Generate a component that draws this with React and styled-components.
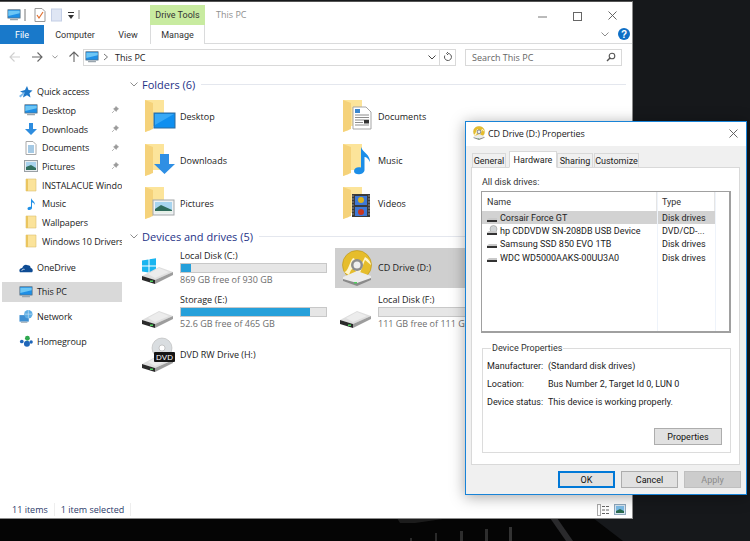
import React from 'react';
import styled, { createGlobalStyle } from 'styled-components';

const GlobalStyle = createGlobalStyle`
  html, body { margin: 0; padding: 0; background: #16181b; }
  body { width: 750px; height: 541px; overflow: hidden; font-family: "Open Sans", "Noto Sans", sans-serif; font-size: 9px; color: #111; }
  * { box-sizing: border-box; }
`;

const Desktop = styled.div`
  position: relative;
  width: 750px;
  height: 541px;
  overflow: hidden;
  background: #16181b;
`;

const Wallpaper = styled.svg`
  position: absolute;
  left: 0;
  top: 0;
`;

const ExplorerWindow = styled.div`
  position: absolute;
  left: 0;
  top: 1px;
  width: 633px;
  height: 518px;
  background: #fff;
  border: 1px solid #8c8c8c;
  border-top-color: #555;
  border-left: 0;
  display: flex;
  flex-direction: column;
`;

const TitleBar = styled.div`
  height: 23px;
  display: flex;
  align-items: flex-start;
  padding: 3px 0 0 7px;
  flex: none;
`;

const QuickTools = styled.div`
  width: 143px;
  height: 20px;
  display: flex;
  align-items: center;
`;

const ToolGlyph = styled.svg`
  flex: none;
  margin-left: ${p => p.$ml || 0}px;
  margin-top: ${p => p.$mt || 0}px;
`;

const ContextTab = styled.div`
  width: 55px;
  height: 20px;
  background: #c8eba0;
  display: flex;
  align-items: center;
  justify-content: center;
  color: #333;
  font-family: Roboto, sans-serif;
`;

const WindowTitle = styled.div`
  margin-left: 11px;
  height: 20px;
  line-height: 19px;
  color: #8f8f8f;
  flex: 1;
`;

const Controls = styled.div`
  display: flex;
  width: 94px;
  justify-content: space-between;
  padding: 6px 15px 0 0;
`;

const RibbonTabs = styled.div`
  height: 19px;
  border-bottom: 1px solid #dadbdc;
  display: flex;
  align-items: stretch;
  flex: none;
  font-family: Roboto, sans-serif;
`;

const FileTab = styled.div`
  width: 44px;
  background: #1979ca;
  color: #fff;
  display: flex;
  align-items: center;
  justify-content: center;
  height: 19px;
`;

const RibbonTab = styled.div`
  width: ${p => p.$w}px;
  display: flex;
  align-items: center;
  justify-content: center;
  color: #333;
  height: 19px;
  background: #fff;
  ${p => p.$context && 'border-left: 1px solid #dadbdc; border-right: 1px solid #dadbdc;'}
`;

const RibbonRight = styled.div`
  margin-left: auto;
  display: flex;
  align-items: center;
  gap: 9px;
  padding-right: 2px;
`;

const NavBar = styled.div`
  height: 26px;
  display: flex;
  align-items: center;
  flex: none;
  padding-left: 9px;
`;

const NavButtons = styled.div`
  width: 74px;
  display: flex;
  align-items: center;
  justify-content: space-between;
  padding-right: 3px;
`;

const AddressBox = styled.div`
  width: 373px;
  height: 17px;
  border: 1px solid #d9d9d9;
  display: flex;
  align-items: center;
  padding-left: 1px;
  color: #222;
  gap: 4px;
`;

const AddressText = styled.span`
  margin-left: 2px;
`;

const AddressEnd = styled.div`
  margin-left: auto;
  display: flex;
  height: 100%;
  align-items: center;
  gap: 3px;
`;

const RefreshCell = styled.div`
  width: 16px;
  height: 100%;
  border-left: 1px solid #d9d9d9;
  display: flex;
  align-items: center;
  justify-content: center;
`;

const SearchBox = styled.div`
  width: 157px;
  height: 17px;
  margin-left: 9px;
  border: 1px solid #d9d9d9;
  display: flex;
  align-items: center;
  justify-content: space-between;
  padding: 0 5px 0 6px;
  color: #666;
`;

const Body = styled.div`
  flex: 1;
  display: flex;
  min-height: 0;
`;

const NavPane = styled.div`
  width: 124px;
  flex: none;
  padding: 12px 2px 0;
  overflow: hidden;
  letter-spacing: -0.1px;
`;

const NavRow = styled.div`
  height: ${p => p.$h || 18.7}px;
  display: flex;
  align-items: center;
  gap: 4px;
  padding-left: ${p => p.$sub ? 22 : 17}px;
  margin-top: ${p => p.$gap || 0}px;
  white-space: nowrap;
  overflow: hidden;
  color: #1c1c1c;
  background: ${p => p.$active ? '#d9d9d9' : 'transparent'};
`;

const NavIconBox = styled.span`
  width: 14px;
  height: 14px;
  flex: none;
  display: flex;
  align-items: center;
  justify-content: center;
`;

const NavPin = styled.span`
  position: absolute;
  left: 111px;
  display: flex;
`;

const Content = styled.div`
  flex: 1;
  padding: 4px 6px 0 6px;
  min-width: 0;
  overflow: hidden;
`;

const GroupHeader = styled.div`
  height: 20px;
  display: flex;
  align-items: center;
  color: #1e3287;
  font-size: 11px;
  gap: 4px;
  white-space: nowrap;
`;

const HeaderLine = styled.div`
  flex: 1;
  height: 1px;
  background: #e4e7ee;
  margin-left: 2px;
`;

const FolderGrid = styled.div`
  display: grid;
  grid-template-columns: 198px 198px;
  grid-auto-rows: 43.5px;
  padding: 1px 0 0 15px;
  height: 132px;
`;

const FolderItem = styled.div`
  display: flex;
  align-items: center;
  gap: 3px;
  color: #222;
`;

const DriveGrid = styled.div`
  display: grid;
  grid-template-columns: 198px 198px;
  grid-auto-rows: 43.5px;
  padding: 2px 0 0 7px;
`;

const DriveItem = styled.div`
  display: flex;
  align-items: center;
  gap: 3px;
  height: 40px;
  background: ${p => p.$selected ? '#cfcfcf' : 'transparent'};
  color: #222;
`;

const DriveIconBox = styled.span`
  width: 36px;
  height: 36px;
  flex: none;
  display: flex;
  align-items: center;
  justify-content: center;
  margin-left: 4px;
`;

const DriveText = styled.div`
  display: flex;
  flex-direction: column;
  width: 147px;
  white-space: nowrap;
  line-height: 12px;
`;

const UsageBar = styled.div`
  height: 10px;
  width: 147px;
  background: #e6e6e6;
  border: 1px solid #c8c8c8;
  margin: 1px 0;
`;

const UsageFill = styled.div`
  height: 100%;
  background: #26a0da;
`;

const DriveFree = styled.div`
  color: #6d6d6d;
`;

const StatusBar = styled.div`
  height: 17px;
  flex: none;
  display: flex;
  align-items: center;
  color: #2b3a6a;
  padding: 0 6px 0 12px;
`;

const StatusCell = styled.div`
  padding-right: 6px;
  margin-right: 6px;
  border-right: 1px solid #eee;
`;

const ViewIcons = styled.div`
  margin-left: auto;
  display: flex;
  gap: 5px;
  align-items: center;
`;

const Dialog = styled.div`
  position: absolute;
  left: 465px;
  top: 121px;
  width: 282px;
  height: 374px;
  background: #f0f0f0;
  border: 1px solid #1883d7;
  box-shadow: 0 2px 14px rgba(0, 0, 0, 0.35);
  display: flex;
  flex-direction: column;
  font-family: Roboto, "Open Sans", sans-serif;
`;

const DialogTitle = styled.div`
  height: 24px;
  background: #fff;
  display: flex;
  align-items: center;
  padding: 0 8px 2px 6px;
  gap: 2px;
  flex: none;
  color: #222;
  font-family: "Open Sans", sans-serif;
  letter-spacing: -0.1px;
`;

const DialogClose = styled.span`
  margin-left: auto;
  display: flex;
`;

const TabStrip = styled.div`
  height: 21px;
  padding: 7px 0 0 6px;
  display: flex;
  align-items: flex-end;
  flex: none;
  position: relative;
  z-index: 1;
`;

const DialogTab = styled.div`
  height: ${p => p.$active ? 17 : 15}px;
  width: ${p => p.$w}px;
  display: flex;
  align-items: center;
  justify-content: center;
  background: ${p => p.$active ? '#fff' : '#f0f0f0'};
  border: 1px solid #d9d9d9;
  border-bottom: ${p => p.$active ? '1px solid #fff' : '1px solid #d9d9d9'};
  margin-left: ${p => p.$ml || 0}px;
  margin-bottom: -1px;
  color: #222;
`;

const TabPane = styled.div`
  height: 298px;
  margin: 0 6px 0 5px;
  background: #fff;
  border: 1px solid #d9d9d9;
  padding: 8px 0 0 9px;
  flex: none;
`;

const PaneLabel = styled.div`
  height: 15px;
  line-height: 12px;
  color: #333;
  padding-left: 1px;
`;

const ListBox = styled.div`
  height: 142px;
  width: 250px;
  border: 1px solid #a0a0a0;
  border-width: 1px 2px 2px 1px;
  position: relative;
`;

const ListGrid = styled.div`
  display: grid;
  grid-template-columns: 175px 58px;
`;

const ListHead = styled.div`
  height: 19px;
  display: flex;
  align-items: center;
  padding-left: 5px;
  color: #333;
  border-right: 1px solid #e5e5e5;
`;

const ListRow = styled.div`
  grid-column: 1 / 3;
  display: grid;
  grid-template-columns: 175px 58px;
  height: 13.3px;
  align-items: center;
  background: ${p => p.$selected ? '#d2d2d2' : 'transparent'};
  white-space: nowrap;
  color: #222;
`;

const RowName = styled.div`
  display: flex;
  align-items: center;
  gap: 2px;
  padding-left: 4px;
`;

const RowType = styled.div`
  padding-left: 5px;
  overflow: hidden;
`;

const ColumnRule = styled.div`
  position: absolute;
  top: 0;
  bottom: 0;
  left: ${p => p.$x}px;
  width: 1px;
  background: #eef3fa;
`;

const GroupBox = styled.fieldset`
  margin: 10px 0 0 1px;
  padding: 0 4px;
  width: 249px;
  height: 110px;
  border: 1px solid #dcdcdc;
  display: flex;
  flex-direction: column;
  min-width: 0;
`;

const Legend = styled.legend`
  padding: 0 1px;
  margin-left: 4px;
  color: #333;
  font-size: 9px;
  line-height: 11px;
`;

const PropRows = styled.div`
  display: flex;
  flex-direction: column;
  margin-top: 3px;
`;

const PropRow = styled.div`
  height: 18px;
  display: grid;
  grid-template-columns: 61px 1fr;
  align-items: center;
  color: #222;
  white-space: nowrap;
`;

const Button = styled.div`
  height: 17px;
  width: ${p => p.$w}px;
  background: ${p => p.$disabled ? '#ccc' : '#e1e1e1'};
  border: 1px solid ${p => p.$primary ? '#0078d7' : p.$disabled ? '#bfbfbf' : '#adadad'};
  ${p => p.$primary && 'box-shadow: inset 0 0 0 1px #0078d7;'}
  color: ${p => p.$disabled ? '#8b8b8b' : '#111'};
  display: flex;
  align-items: center;
  justify-content: center;
`;

const GroupButtonRow = styled.div`
  margin-top: 17px;
  display: flex;
  justify-content: flex-end;
  padding-right: 4px;
`;

const DialogFooter = styled.div`
  flex: 1;
  display: flex;
  justify-content: flex-end;
  gap: 6px;
  padding: 6px 5px 0 0;
`;

/* ---- icons ---- */

const Monitor = ({ size = 14 }) => (
  <svg width={size} height={size} viewBox="0 0 16 16">
    <rect x="1" y="2" width="14" height="9.5" fill="#1e8fe6" stroke="#5a6a78" strokeWidth="0.8" />
    <path d="M1.5 3 L14.5 3 L14.5 6 L1.5 9Z" fill="#6cc6f5" />
    <rect x="3.5" y="12.5" width="9" height="1.5" fill="#9aa5ad" />
  </svg>
);

const Pin = () => (
  <svg width="8" height="8" viewBox="0 0 8 8">
    <path d="M5 0.5 L7.5 3 L6.4 3.4 L5.2 5.4 L2.6 2.8 L4.6 1.6Z M3.4 4.6 L1 7" fill="#9a9a9a" stroke="#9a9a9a" strokeWidth="0.7" />
  </svg>
);

const BlueArrow = ({ size = 14 }) => (
  <svg width={size} height={size} viewBox="0 0 14 14">
    <path d="M5 1 H9 V7 H13 L7 13 L1 7 H5Z" fill="#2e8ddf" />
  </svg>
);

const MiniDoc = () => (
  <svg width="12" height="14" viewBox="0 0 12 14">
    <path d="M1 .5 H8 L11 3.5 V13.5 H1Z" fill="#fff" stroke="#a8a8a8" />
    <path d="M3 5H9M3 7H9M3 9H9M3 11H9" stroke="#4a93c9" />
  </svg>
);

const MiniPicture = () => (
  <svg width="14" height="12" viewBox="0 0 14 12">
    <rect x=".5" y=".5" width="13" height="11" fill="#e9edf0" stroke="#9aa0a5" />
    <rect x="2" y="2" width="10" height="8" fill="#a9d3ee" />
    <path d="M2 7 L7 5 L12 8 V10 H2Z" fill="#31705f" />
  </svg>
);

const Note = ({ size = 14 }) => (
  <svg width={size} height={size} viewBox="0 0 14 14">
    <path d="M7 1 C8 4 11 4 11 8 C10 6 9 5.5 8 5.5 V11 C8 13 3.5 14 3.5 11.5 C3.5 10 5.5 9.3 7 9.8Z" fill="#1e8fe6" />
  </svg>
);

const MiniFolder = () => (
  <svg width="12" height="14" viewBox="0 0 12 14">
    <path d="M1 1 H11 V13 H1Z" fill="#fbe39a" stroke="#dcc070" strokeWidth=".6" />
    <path d="M1 1 H3 V13 H1Z" fill="#eac55f" />
  </svg>
);

const Star = () => (
  <svg width="14" height="14" viewBox="0 0 14 14">
    <path d="M8 1 L9.5 5 L13.5 5.5 L10.5 8.3 L11.5 12.5 L8 10.3 L4 12.5 L5 8.3 L1 6.5 L6 5Z" fill="#1e78c8" />
    <path d="M0 11 L5 7 L6 8 L1.5 12.5Z" fill="#7cb9ea" />
  </svg>
);

const Cloud = () => (
  <svg width="15" height="10" viewBox="0 0 15 10">
    <path d="M1 9.5 C-.5 7 1 5 3.5 5 C4 2 7 .5 9.5 2 C11.5 2 12.5 3.5 12.5 5 C14.5 5 15.5 8 14 9.5Z" fill="#0f4c94" />
    <path d="M3 8 C3 6.5 5 6 6 6.5" stroke="#fff" strokeWidth=".8" fill="none" />
  </svg>
);

const Globe = () => (
  <svg width="15" height="15" viewBox="0 0 15 15">
    <rect x="0.5" y="6" width="10" height="7" fill="#3f8fd2" />
    <circle cx="10" cy="5" r="4.5" fill="#5faee4" />
    <path d="M6 5H14M10 .5V9.5" stroke="#d7ecfa" strokeWidth=".6" />
    <rect x="2" y="13" width="7" height="1.2" fill="#9aa5ad" />
  </svg>
);

const Homegroup = () => (
  <svg width="15" height="13" viewBox="0 0 15 13">
    <circle cx="9" cy="3" r="2.6" fill="#2fa84f" />
    <circle cx="8.5" cy="9" r="3.2" fill="#1f66b8" />
    <circle cx="3" cy="6.5" r="2" fill="#1f66b8" />
    <circle cx="13" cy="7" r="1.8" fill="#1f66b8" />
  </svg>
);

const BigFolderBack = () => (
  <>
    <path d="M0 0 H19 V26 H6 V30 L0 32Z" fill="#fce49a" />
    <path d="M0 0 L8 3 V29 L0 32Z" fill="#f5d27a" />
  </>
);

const FolderIcon = ({ overlay }) => (
  <svg width="32" height="33" viewBox="0 0 32 33">
    <BigFolderBack />
    {overlay === 'desktop' && (
      <g>
        <rect x="9" y="13" width="21" height="15" fill="#0f8ff0" stroke="#2c6a9e" />
        <path d="M10 14 H29 L10 25Z" fill="#38a9f7" />
      </g>
    )}
    {overlay === 'downloads' && <path d="M15 10 H24 V20 H30 L19.5 30 L9 20 H15Z" fill="#2f8fe4" />}
    {overlay === 'documents' && (
      <g>
        <path d="M10 7 H23 L28 12 V29 H10Z" fill="#fff" stroke="#a5a5a5" />
        <path d="M12 9 H17 V13 H12Z" fill="#3b87cf" />
        <path d="M12 15H26M12 17.5H26M12 20H26M12 22.5H20M12 25H26" stroke="#8c8c8c" />
        <rect x="21" y="20" width="5" height="3.5" fill="#333" />
      </g>
    )}
    {overlay === 'music' && (
      <path d="M18 3 C20 9 27 10 27 18 C25 14 23 13 21.5 13 V26 C21.5 31 11 32 11 27 C11 23.500 15 22.500 18 23.500Z" fill="#1c8ee8" />
    )}
    {overlay === 'pictures' && (
      <g>
        <rect x="8" y="13" width="21" height="15" fill="#eef1f3" stroke="#a3a7aa" />
        <rect x="10" y="15" width="17" height="11" fill="#a7d4ef" />
        <path d="M10 22 L16 18 L27 23 V26 H10Z" fill="#2f6c5c" />
        <path d="M10 24 H27 V26 H10Z" fill="#e6f0e8" />
      </g>
    )}
    {overlay === 'videos' && (
      <g>
        <rect x="9" y="7" width="18" height="23" fill="#3a3a3a" />
        <rect x="12" y="9" width="12" height="9" fill="#3e78d6" />
        <rect x="12" y="20" width="12" height="9" fill="#3e78d6" />
        <circle cx="18" cy="13" r="3" fill="#d9b21d" />
        <circle cx="18" cy="25" r="3" fill="#c9361f" />
        <path d="M10 8.500V29M26 8.500V29" stroke="#ddd" strokeWidth="1" strokeDasharray="1 2" />
      </g>
    )}
  </svg>
);

const DriveBase = ({ y = 0 }) => (
  <g transform={`translate(0 ${y})`}>
    <path d="M0 26 L17 17 L31 22 L13 30Z" fill="#dedede" />
    <path d="M6 24 L17 18 L27 22 L13 28Z" fill="#ececec" />
    <path d="M0 26 L13 30 V34 L0 30Z" fill="#2a2a2a" />
    <path d="M13 30 L31 22 V25 L13 34Z" fill="#9d9d9d" />
    <rect x="8" y="30.500" width="3" height="1.500" fill="#4fce5d" />
  </g>
);

const DriveIcon = ({ kind }) => (
  <svg width="34" height="36" viewBox="0 0 34 36">
    {kind === 'windows' && (
      <path d="M0 10.500 L6.500 9.500 V15.500 H0Z M7.500 9.300 L14 8.300 V15.500 H7.500Z M0 16.500 H6.500 V22.500 L0 21.500Z M7.500 16.500 H14 V23.700 L7.500 22.700Z" fill="#19b5f0" />
    )}
    {kind === 'dvd' && (
      <g>
        <circle cx="20" cy="11" r="10" fill="#d9dde0" stroke="#b5b5b5" strokeWidth=".6" />
        <circle cx="20" cy="11" r="3" fill="#fff" stroke="#aaa" strokeWidth=".6" />
      </g>
    )}
    <DriveBase y={kind === 'dvd' ? 1 : 0} />
    {kind === 'dvd' && (
      <g>
        <rect x="12" y="15" width="21" height="10" rx="1" fill="#151515" />
        <text x="22.500" y="23" fontSize="8" textAnchor="middle" fill="#fff" fontFamily="'Liberation Sans', sans-serif">DVD</text>
      </g>
    )}
  </svg>
);

const GoldDisc = ({ size = 36 }) => (
  <svg width={size} height={size} viewBox="0 0 36 36">
    <circle cx="18" cy="15" r="14.500" fill="#e6bd2c" stroke="#b89418" strokeWidth=".6" />
    <path d="M5 22 C10 22 11 8 15 8 L20 19 L26 7 C30 9 32 13 32 15 L26 10 L21 23 C16 24 14 12 10 25Z" fill="#fff6cc" />
    <circle cx="18" cy="15" r="6" fill="#8d8d8d" />
    <circle cx="18" cy="15" r="3.500" fill="#efefef" />
    <path d="M4 27 L18 21 L32 26 L32 30 L18 35 L4 31Z" fill="#ececec" />
    <path d="M4 29 L18 33 L32 28 V30 L18 36 L4 31Z" fill="#8a8a8a" />
    <rect x="15" y="32" width="3" height="1.500" fill="#4fce5d" />
  </svg>
);

const MiniDrive = ({ disc }) => (
  <svg width="12" height="12" viewBox="0 0 12 12">
    {disc && <circle cx="7.500" cy="4" r="3.500" fill="#d0d4d6" stroke="#888" strokeWidth=".5" />}
    <path d="M1 7.500 L3 6 H11 V8 H1Z" fill="#c9c9c9" />
    <rect x="1" y="8" width="10" height="2" fill="#333" />
  </svg>
);

const Chev = ({ color = '#8d8d8d', w = 8, h = 5 }) => (
  <svg width={w} height={h} viewBox="0 0 8 5">
    <path d="M.5 .5 L4 4 L7.500 .5" stroke={color} fill="none" strokeWidth="1" />
  </svg>
);

const Close = ({ size = 9 }) => (
  <svg width={size} height={size} viewBox="0 0 9 9">
    <path d="M.5 .5 L8.500 8.500 M8.500 .5 L.5 8.500" stroke="#555" strokeWidth=".9" />
  </svg>
);

const ArrowGlyph = styled.svg`
  transform: rotate(${p => p.$dir}deg);
`;

const Arrow = ({ dir, color }) => (
  <ArrowGlyph $dir={dir} width="12" height="12" viewBox="0 0 12 12">
    <path d="M1 6 H11 M6.500 1.500 L11 6 L6.500 10.500" stroke={color} fill="none" strokeWidth="1.100" />
  </ArrowGlyph>
);

const navItems = [
  { label: 'Desktop', icon: <Monitor />, pin: true },
  { label: 'Downloads', icon: <BlueArrow />, pin: true },
  { label: 'Documents', icon: <MiniDoc />, pin: true },
  { label: 'Pictures', icon: <MiniPicture />, pin: true },
  { label: 'INSTALACUE Windows', icon: <MiniFolder /> },
  { label: 'Music', icon: <Note /> },
  { label: 'Wallpapers', icon: <MiniFolder /> },
  { label: 'Windows 10 Drivers', icon: <MiniFolder /> },
];

const folders = [
  ['Desktop', 'desktop'],
  ['Documents', 'documents'],
  ['Downloads', 'downloads'],
  ['Music', 'music'],
  ['Pictures', 'pictures'],
  ['Videos', 'videos'],
];

const diskRows = [
  { name: 'Corsair Force GT', type: 'Disk drives', selected: true },
  { name: 'hp CDDVDW SN-208DB USB Device', type: 'DVD/CD-...', disc: true },
  { name: 'Samsung SSD 850 EVO 1TB', type: 'Disk drives' },
  { name: 'WDC WD5000AAKS-00UU3A0', type: 'Disk drives' },
];

export default function App() {
  return (
    <>
      <GlobalStyle />
      <Desktop>
        <Wallpaper width="750" height="541" viewBox="0 0 750 541">
          <path d="M0 518 H593 L623 541 H0Z" fill="#050505" />
          <path d="M397 518 H450 L415 523 H400Z" fill="#1c1c1c" />
          <path d="M550 518 H557 L573 541 H566Z" fill="#2a2a2c" />
          <rect x="410" y="538" width="2" height="3" fill="#2a2a2a" />
          <rect x="435" y="533" width="2" height="8" fill="#2a2a2a" />
          <rect x="460" y="531" width="3" height="10" fill="#2e2e2e" />
          <rect x="485" y="529" width="3" height="12" fill="#2e2e2e" />
          <rect x="509" y="527" width="3" height="14" fill="#333" />
        </Wallpaper>

        <ExplorerWindow>
          <TitleBar>
            <QuickTools>
              <Monitor size={14} />
              <ToolGlyph width="8" height="16" viewBox="0 0 8 16">
                <path d="M4 2V14" stroke="#777" />
              </ToolGlyph>
              <ToolGlyph $ml={5} width="12" height="14" viewBox="0 0 12 14">
                <path d="M1 .5H8L11 3.500V13.500H1Z" fill="#fff" stroke="#999" />
                <path d="M3 7L5 10L9 4" stroke="#e07030" fill="none" strokeWidth="1.200" />
              </ToolGlyph>
              <ToolGlyph $ml={5} width="12" height="14" viewBox="0 0 12 14">
                <rect x=".5" y="1" width="10" height="12" fill="#dfe6f4" stroke="#c4cfe6" />
              </ToolGlyph>
              <ToolGlyph $ml={5} width="6" height="7" viewBox="0 0 6 7">
                <path d="M0 0H6V1H0Z M0 3H6L3 7Z" fill="#333" />
              </ToolGlyph>
              <ToolGlyph $ml={1} width="8" height="12" viewBox="0 0 8 12">
                <path d="M4 1V10" stroke="#888" />
              </ToolGlyph>
            </QuickTools>
            <ContextTab>Drive Tools</ContextTab>
            <WindowTitle>This PC</WindowTitle>
            <Controls>
              <ToolGlyph $mt={1} width="9" height="9" viewBox="0 0 9 9">
                <path d="M0 5H9" stroke="#777" />
              </ToolGlyph>
              <ToolGlyph $mt={1} width="9" height="9" viewBox="0 0 9 9">
                <rect x=".5" y=".5" width="8" height="8" fill="none" stroke="#666" />
              </ToolGlyph>
              <Close />
            </Controls>
          </TitleBar>

          <RibbonTabs>
            <FileTab>File</FileTab>
            <RibbonTab $w={62}>Computer</RibbonTab>
            <RibbonTab $w={44}>View</RibbonTab>
            <RibbonTab $w={55} $context>Manage</RibbonTab>
            <RibbonRight>
              <Chev />
              <svg width="12" height="12" viewBox="0 0 12 12">
                <circle cx="6" cy="6" r="6" fill="#0f6fc6" />
                <text x="6" y="9.500" textAnchor="middle" fontSize="10" fontWeight="700" fill="#fff" fontFamily="'Liberation Sans', sans-serif">?</text>
              </svg>
            </RibbonRight>
          </RibbonTabs>

          <NavBar>
            <NavButtons>
              <Arrow dir={180} color="#cfcfcf" />
              <Arrow dir={0} color="#666" />
              <Chev w={6} h={4} color="#777" />
              <Arrow dir={-90} color="#666" />
            </NavButtons>
            <AddressBox>
              <Monitor size={14} />
              <svg width="6" height="8" viewBox="0 0 6 8">
                <path d="M1 1L4.500 4L1 7" stroke="#777" fill="none" />
              </svg>
              <AddressText>This PC</AddressText>
              <AddressEnd>
                <Chev color="#444" />
                <RefreshCell>
                  <svg width="10" height="10" viewBox="0 0 10 10">
                    <path d="M5 1.500A3.500 3.500 0 1 1 1.800 3.500 M5 0L3.500 1.500L5 3" stroke="#555" fill="none" />
                  </svg>
                </RefreshCell>
              </AddressEnd>
            </AddressBox>
            <SearchBox>
              Search This PC
              <svg width="10" height="10" viewBox="0 0 10 10">
                <circle cx="6" cy="4" r="2.800" stroke="#555" fill="none" strokeWidth="1.100" />
                <path d="M4 6L1 9" stroke="#555" strokeWidth="1.400" />
              </svg>
            </SearchBox>
          </NavBar>

          <Body>
            <NavPane>
              <NavRow $h={19}>
                <NavIconBox><Star /></NavIconBox>
                Quick access
              </NavRow>
              {navItems.map(item => (
                <NavRow key={item.label} $sub>
                  <NavIconBox>{item.icon}</NavIconBox>
                  {item.label}
                  {item.pin && <NavPin><Pin /></NavPin>}
                </NavRow>
              ))}
              <NavRow $h={20} $gap={7}>
                <NavIconBox><Cloud /></NavIconBox>
                OneDrive
              </NavRow>
              <NavRow $h={20} $gap={4} $active>
                <NavIconBox><Monitor /></NavIconBox>
                This PC
              </NavRow>
              <NavRow $h={20} $gap={5}>
                <NavIconBox><Globe /></NavIconBox>
                Network
              </NavRow>
              <NavRow $h={20} $gap={5}>
                <NavIconBox><Homegroup /></NavIconBox>
                Homegroup
              </NavRow>
            </NavPane>

            <Content>
              <GroupHeader>
                <Chev />
                Folders (6)
                <HeaderLine />
              </GroupHeader>
              <FolderGrid>
                {folders.map(([name, overlay]) => (
                  <FolderItem key={name}>
                    <FolderIcon overlay={overlay} />
                    {name}
                  </FolderItem>
                ))}
              </FolderGrid>
              <GroupHeader>
                <Chev />
                Devices and drives (5)
                <HeaderLine />
              </GroupHeader>
              <DriveGrid>
                <DriveItem>
                  <DriveIconBox><DriveIcon kind="windows" /></DriveIconBox>
                  <DriveText>
                    Local Disk (C:)
                    <UsageBar><UsageFill style={{ width: '7%' }} /></UsageBar>
                    <DriveFree>869 GB free of 930 GB</DriveFree>
                  </DriveText>
                </DriveItem>
                <DriveItem $selected>
                  <DriveIconBox><GoldDisc /></DriveIconBox>
                  <DriveText>CD Drive (D:)</DriveText>
                </DriveItem>
                <DriveItem>
                  <DriveIconBox><DriveIcon /></DriveIconBox>
                  <DriveText>
                    Storage (E:)
                    <UsageBar><UsageFill style={{ width: '89%' }} /></UsageBar>
                    <DriveFree>52.6 GB free of 465 GB</DriveFree>
                  </DriveText>
                </DriveItem>
                <DriveItem>
                  <DriveIconBox><DriveIcon /></DriveIconBox>
                  <DriveText>
                    Local Disk (F:)
                    <UsageBar />
                    <DriveFree>111 GB free of 111 GB</DriveFree>
                  </DriveText>
                </DriveItem>
                <DriveItem>
                  <DriveIconBox><DriveIcon kind="dvd" /></DriveIconBox>
                  <DriveText>DVD RW Drive (H:)</DriveText>
                </DriveItem>
              </DriveGrid>
            </Content>
          </Body>

          <StatusBar>
            <StatusCell>11 items</StatusCell>
            <StatusCell>1 item selected</StatusCell>
            <ViewIcons>
              <svg width="12" height="12" viewBox="0 0 12 12">
                <rect x=".5" y=".5" width="3" height="11" fill="#fff" stroke="#aaa" />
                <path d="M5 2.500H8M9 2.500H12M5 6H8M9 6H12M5 9.500H8M9 9.500H12" stroke="#666" />
              </svg>
              <svg width="12" height="11" viewBox="0 0 12 11">
                <rect x=".5" y=".5" width="11" height="10" fill="#d9e6f2" stroke="#8fa8bd" />
                <rect x="2" y="2" width="8" height="7" fill="#7cbbe6" />
                <path d="M2 7L6 5L10 7V9H2Z" fill="#2b6b4f" />
              </svg>
            </ViewIcons>
          </StatusBar>
        </ExplorerWindow>

        <Dialog>
          <DialogTitle>
            <GoldDisc size={14} />
            CD Drive (D:) Properties
            <DialogClose><Close /></DialogClose>
          </DialogTitle>
          <TabStrip>
            <DialogTab $w={34}>General</DialogTab>
            <DialogTab $w={48} $ml={3} $active>Hardware</DialogTab>
            <DialogTab $w={36}>Sharing</DialogTab>
            <DialogTab $w={45} $ml={1}>Customize</DialogTab>
          </TabStrip>
          <TabPane>
            <PaneLabel>All disk drives:</PaneLabel>
            <ListBox>
              <ColumnRule $x={175} />
              <ColumnRule $x={233} />
              <ListGrid>
                <ListHead>Name</ListHead>
                <ListHead>Type</ListHead>
                {diskRows.map(row => (
                  <ListRow key={row.name} $selected={row.selected}>
                    <RowName>
                      <MiniDrive disc={row.disc} />
                      {row.name}
                    </RowName>
                    <RowType>{row.type}</RowType>
                  </ListRow>
                ))}
              </ListGrid>
            </ListBox>
            <GroupBox>
              <Legend>Device Properties</Legend>
              <PropRows>
                <PropRow><span>Manufacturer:</span><span>(Standard disk drives)</span></PropRow>
                <PropRow><span>Location:</span><span>Bus Number 2, Target Id 0, LUN 0</span></PropRow>
                <PropRow><span>Device status:</span><span>This device is working properly.</span></PropRow>
              </PropRows>
              <GroupButtonRow>
                <Button $w={68}>Properties</Button>
              </GroupButtonRow>
            </GroupBox>
          </TabPane>
          <DialogFooter>
            <Button $w={57} $primary>OK</Button>
            <Button $w={57}>Cancel</Button>
            <Button $w={57} $disabled>Apply</Button>
          </DialogFooter>
        </Dialog>
      </Desktop>
    </>
  );
}
